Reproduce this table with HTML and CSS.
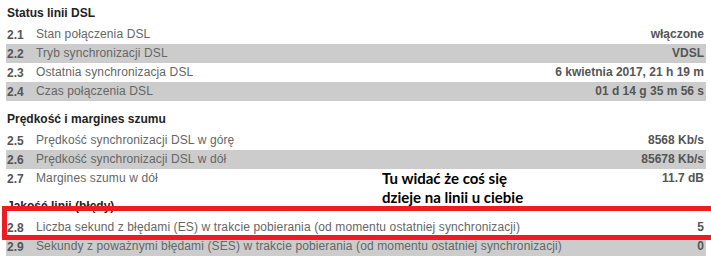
FILE: index.html
```html
<!DOCTYPE html>
<html>
<head>
  <title>Status linii DSL</title>
  <link rel="stylesheet" href="styles.css">
</head>
<body>
  <div class="status">
    <section class="group">
      <h3>Status linii DSL</h3>
      <div class="row"><span class="num">2.1</span><span class="label">Stan połączenia DSL</span><span class="val">włączone</span></div>
      <div class="row"><span class="num">2.2</span><span class="label">Tryb synchronizacji DSL</span><span class="val">VDSL</span></div>
      <div class="row"><span class="num">2.3</span><span class="label">Ostatnia synchronizacja DSL</span><span class="val">6 kwietnia 2017, 21 h 19 m</span></div>
      <div class="row"><span class="num">2.4</span><span class="label">Czas połączenia DSL</span><span class="val">01 d 14 g 35 m 56 s</span></div>
    </section>

    <section class="group">
      <h3>Prędkość i margines szumu</h3>
      <div class="row"><span class="num">2.5</span><span class="label">Prędkość synchronizacji DSL w górę</span><span class="val">8568 Kb/s</span></div>
      <div class="row"><span class="num">2.6</span><span class="label">Prędkość synchronizacji DSL w dół</span><span class="val">85678 Kb/s</span></div>
      <div class="row"><span class="num">2.7</span><span class="label">Margines szumu w dół</span><span class="val">11.7 dB</span></div>
    </section>

    <section class="group">
      <h3>Jakość linii (błędy)</h3>
      <div class="row"><span class="num">2.8</span><span class="label">Liczba sekund z błędami (ES) w trakcie pobierania (od momentu ostatniej synchronizacji)</span><span class="val">5</span></div>
      <div class="row"><span class="num">2.9</span><span class="label">Sekundy z poważnymi błędami (SES) w trakcie pobierania (od momentu ostatniej synchronizacji)</span><span class="val">0</span></div>
    </section>
  </div>

  <!-- dopisek i ramka na wierzchu -->
  <p class="note">Tu widać że coś się<br>dzieje na linii u ciebie</p>
  <div class="mark"></div>
</body>
</html>
```

FILE: styles.css
```css
body {
  font-family: 'Liberation Sans', Arial, sans-serif;
  background-color: #fff;
  color: #666;
  margin: 0;
  padding: 0;
  position: relative;
  overflow: hidden;
}

.status {
  width: 700px;
  margin-left: 6px;
}

.group h3 {
  margin: 9px 0 2px;
  padding-left: 1px;
  font-size: 12px;
  line-height: 19px;
  font-weight: bold;
  color: #222;
}

.group:first-child h3 {
  margin-top: 4px;
}

.row {
  display: flex;
  align-items: baseline;
  height: 19px;
  line-height: 19px;
  padding: 0 2px 0 1px;
  font-size: 12px;
}

.row:nth-of-type(even) {
  background-color: #ccc;
}

.num {
  width: 29px;
  flex: none;
  font-size: 12px;
  font-weight: bold;
  color: #555;
  position: relative;
  top: 1px;
}

.label {
  flex: 1;
  color: #666;
  letter-spacing: 0.12px;
}

.val {
  font-weight: bold;
  color: #555;
}

.note {
  position: absolute;
  left: 382px;
  top: 169px;
  margin: 0;
  font-family: Lato, 'Open Sans', sans-serif;
  font-size: 15px;
  line-height: 19px;
  font-weight: bold;
  color: #000;
}

.mark {
  position: absolute;
  left: 2px;
  top: 206px;
  width: 730px;
  height: 34px;
  box-sizing: border-box;
  border: 5px solid #ed1c24;
}
```
